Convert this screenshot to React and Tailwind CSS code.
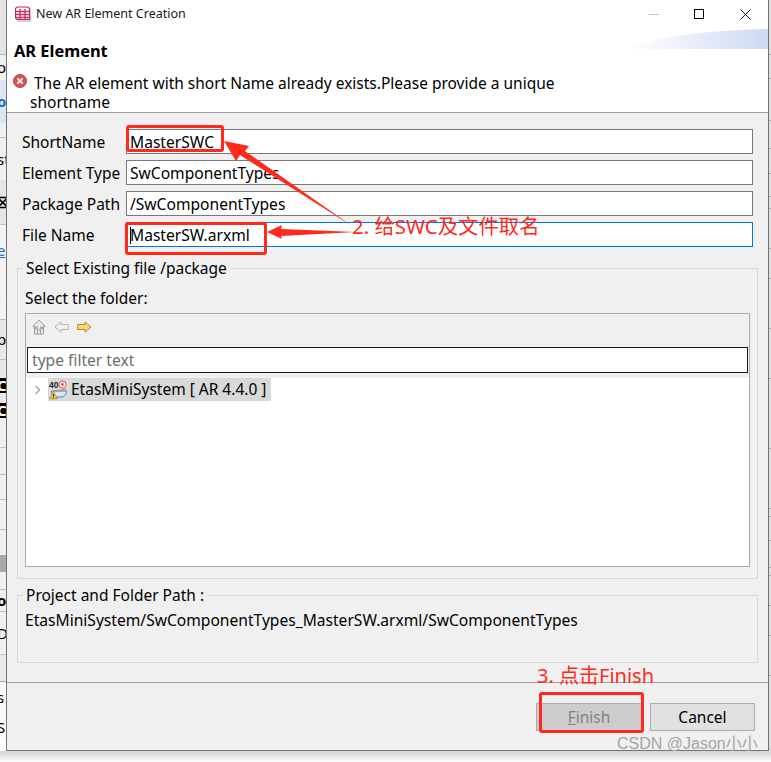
import React from 'react';

const FONT = "font-['Noto_Sans','Noto_Sans_CJK_SC',sans-serif]";

// bits of the window behind the dialog, top to bottom
const leftScraps = [
  { h: 'h-[55px]', cls: 'bg-[#e4e4e4] border-b border-[#b5b5b5]' },
  { h: 'h-[25px]', cls: 'bg-[#f0f0f0]', text: 'oc', tc: 'text-black' },
  { h: 'h-[43px]', cls: 'bg-[#dbe6f1]', text: 'o', tc: 'text-[#1a6fc0] font-bold' },
  { h: 'h-[15px]', cls: 'bg-[#f0f0f0] border-b border-[#bdbdbd]' },
  { h: 'h-[42px]', cls: 'bg-[#f0f0f0]', text: 'st', tc: 'text-black' },
  { h: 'h-[45px]', cls: 'bg-[#e6e6e6] border-b border-[#c4c4c4]', text: '⛝', tc: 'text-black font-bold' },
  { h: 'h-[50px]', cls: 'bg-[#f3f3f3]', text: 'e', tc: 'text-[#1a6fc0] underline' },
  { h: 'h-[45px]', cls: 'bg-[#f3f3f3] border-b border-[#bdbdbd]', text: ':', tc: 'text-black' },
  { h: 'h-[40px]', cls: 'bg-[#e8e8e8] border-b border-[#bdbdbd]', text: 'p', tc: 'text-black' },
  { h: 'h-[18px]', cls: 'bg-[#e8e8e8]' },
  { h: 'h-[15px]', cls: 'bg-black', text: 'C', tc: 'text-white font-bold' },
  { h: 'h-[10px]', cls: 'bg-[#e8e8e8]' },
  { h: 'h-[15px]', cls: 'bg-black', text: 'C', tc: 'text-white font-bold' },
  { h: 'h-[30px]', cls: 'bg-[#f0f0f0] border-b border-[#c4c4c4]' },
  { h: 'h-[27px]', cls: 'bg-[#f0f0f0] border-b border-[#c4c4c4]' },
  { h: 'h-[25px]', cls: 'bg-[#f0f0f0] border-b border-[#c4c4c4]' },
  { h: 'h-[30px]', cls: 'bg-[#f0f0f0] border-b border-[#c4c4c4]' },
  { h: 'h-[25px]', cls: 'bg-[#f0f0f0]' },
  { h: 'h-[17px]', cls: 'bg-[#a9a9a9]' },
  { h: 'h-[18px]', cls: 'bg-[#f0f0f0] border-b border-[#c4c4c4]' },
  { h: 'h-[22px]', cls: 'bg-[#f0f0f0] border-b border-[#c4c4c4]', text: 'o', tc: 'text-black font-bold' },
  { h: 'h-[43px]', cls: 'bg-[#f0f0f0] border-b border-[#c4c4c4]', text: 'D', tc: 'text-black' },
  { h: 'h-[27px]', cls: 'bg-[#e9e9e9] border-b border-[#a8a8a8]' },
  { h: 'h-[30px]', cls: 'bg-[#fafafa]', text: 's', tc: 'text-black' },
  { h: 'h-[30px]', cls: 'bg-[#fafafa]', text: 'S', tc: 'text-black' },
];

const rightLines = [55, 24, 42, 28, 25, 23, 12, 40, 30, 50, 50, 70, 60, 8, 24, 27, 8, 30, 30, 40];

const Field = ({ label, value, active }) => (
  <div className="flex items-center h-[25px]">
    <label className="w-[104px] text-[15.500px] leading-[25px] pt-[1px] text-black">{label}</label>
    <div className={`w-[627px] h-[25px] bg-white border flex items-center pl-[3px] pt-[2px] text-[15.600px] text-black ${active ? 'border-[#0078d7]' : 'border-[#7a7a7a]'}`}>
      {active && <span className="w-px h-[17px] bg-black -mr-px" />}
      {value}
    </div>
  </div>
);

const AppIcon = () => (
  <svg width="16" height="16" viewBox="0 0 16 16" className="shrink-0">
    <rect x="2" y="2" width="14" height="14" fill="#d4d4d4" />
    <path d="M.5 3.500a2.500 2.500 0 0 1 2.500-2.500h9a2.500 2.500 0 0 1 2.500 2.500v10h-11.500a2.500 2.500 0 0 1-2.500-2.500z" fill="#fff" stroke="#c2265f" strokeWidth="1.200" />
    <path d="M1 5.500h13.500M1 8.500h13.500M1 11.500h13.500M5 3v10.500M10 3v10.500" stroke="#c9336b" strokeWidth="1.400" />
  </svg>
);

const ErrorIcon = () => (
  <svg width="14" height="14" viewBox="0 0 15 15" className="shrink-0">
    <circle cx="7.500" cy="7.500" r="7" fill="#d9534f" stroke="#b9403c" />
    <path d="M4.700 4.700l5.600 5.600M10.300 4.700l-5.600 5.600" stroke="#fff" strokeWidth="2" />
  </svg>
);

const HomeIcon = () => (
  <svg width="14" height="16" viewBox="0 0 14 16">
    <path d="M7 1L.8 7.500h1.700V15h9V7.500h1.700z" fill="#e9e9e9" stroke="#9c9c9c" />
    <path d="M5.500 15v-4h3v4M3.500 8h2v2h-2zM8.500 8h2v2h-2z" fill="none" stroke="#9c9c9c" />
  </svg>
);

const ArrowIcon = ({ flip, fill, stroke }) => (
  <svg width="15" height="12" viewBox="0 0 15 12" className={`mt-[2px] ${flip ? '-scale-x-100' : ''}`}>
    <path d="M.7 3.500h7.300V.8L14 6l-6 5.200V8.500H.7z" fill={fill} stroke={stroke} strokeLinejoin="round" />
  </svg>
);

const ProjectIcon = () => (
  <svg width="18" height="20" viewBox="0 0 18 20" className="shrink-0">
    <text x="0" y="7.500" fontSize="8.500" fontWeight="700" fill="#222" fontFamily="Liberation Sans, sans-serif">40</text>
    <circle cx="13.500" cy="4.500" r="3.500" fill="#fff" stroke="#e24a4a" />
    <circle cx="13.500" cy="4.500" r="1.400" fill="#e24a4a" />
    <path d="M2.500 11h15c0 3.500-2.500 6-5.500 6H7c-2.500 0-4.500-2.500-4.500-6z" fill="#dbe8f7" stroke="#3f7fd0" />
    <path d="M4.500 11.500L17 9" stroke="#d88a2e" strokeWidth="1.200" />
    <path d="M4.500 11.500L.5 18.800h8z" fill="#f6c945" stroke="#b58a1a" strokeWidth=".8" />
    <path d="M4.500 14v2.500M4.500 17.200v.8" stroke="#222" />
  </svg>
);

export default function App() {
  return (
    <div className={`relative w-[771px] h-[762px] overflow-hidden bg-white flex flex-col ${FONT}`}>
      <div className="flex h-[751px]">
        {/* window behind */}
        <div className="w-[6px] shrink-0 flex flex-col overflow-hidden">
          {leftScraps.map((row, i) => (
            <div key={i} className={`${row.h} ${row.cls} shrink-0 flex items-center justify-start overflow-hidden text-[15px] leading-none`}>
              {row.text && <span className={`${row.tc} -ml-[3px] whitespace-nowrap`}>{row.text}</span>}
            </div>
          ))}
        </div>

        <div className="w-[763px] shrink-0 flex flex-col bg-[#f0f0f0] border-x border-b border-[#747474]">
          {/* title + banner */}
          <div className="relative h-[113px] shrink-0 bg-white border-b border-[#a0a0a0]">
            <svg width="142" height="22" viewBox="0 0 142 22" className="absolute right-0 top-[28px]">
              <defs>
                <linearGradient id="band" x1="0" x2="1" y1="0" y2="0">
                  <stop offset="0" stopColor="#ffffff" />
                  <stop offset="1" stopColor="#cfdaf3" />
                </linearGradient>
              </defs>
              <path d="M0 21C30 8 90 2 142 1v20z" fill="url(#band)" />
            </svg>
            <div className="flex items-center h-[28px] pl-[8px]">
              <AppIcon />
              <span className="ml-[5px] text-[12.500px] text-[#1a1a1a] whitespace-nowrap">New AR Element Creation</span>
              <div className="ml-auto flex items-center h-full pr-[17px] gap-[35px]">
                <span className="w-[10px] h-px bg-[#c4c4c4]" />
                <span className="w-[10px] h-[10px] border border-black" />
                <svg width="11" height="11" viewBox="0 0 11 11" className="ml-[1px]">
                  <path d="M.5.500l10 10M10.500.500l-10 10" stroke="#111" />
                </svg>
              </div>
            </div>
            <div className="pl-[7px] mt-[12px] text-[16.400px] leading-[22px] font-bold text-black">AR Element</div>
            <div className="pl-[6px] mt-[12px] h-[19px] flex items-start gap-[7px]">
              <ErrorIcon />
              <span className="text-[15.500px] leading-[19px] text-black whitespace-nowrap">The AR element with short Name already exists.Please provide a unique</span>
            </div>
            <div className="pl-[23px] text-[15.500px] leading-[19px] text-black">shortname</div>
          </div>

          {/* form */}
          <div className="pt-[16px] pl-[15px] flex flex-col gap-[6px]">
            <Field label="ShortName" value="MasterSWC" />
            <Field label="Element Type" value="SwComponentTypes" />
            <Field label="Package Path" value="/SwComponentTypes" />
            <Field label="File Name" value="MasterSW.arxml" active />
          </div>

          <fieldset className="mt-[11px] ml-[10px] w-[741px] h-[321px] border border-[#d9d9d9] px-[7px] pt-[10px]">
            <legend className="-ml-[2px] px-[3px] text-[15.500px] leading-[20px] text-black">Select Existing file /package</legend>
            <div className="text-[15.500px] leading-[20px] h-[25px] text-black">Select the folder:</div>
            <div className="w-[725px] h-[254px] border border-[#ababab] bg-white flex flex-col">
              <div className="bg-[#f0f0f0] h-[64px] shrink-0 px-[1px]">
                <div className="flex items-start h-[33px] pt-[5px] pl-[5px] gap-[8px]">
                  <HomeIcon />
                  <ArrowIcon flip fill="#f2f2f2" stroke="#b3b3b3" />
                  <ArrowIcon fill="#f7d774" stroke="#b5892a" />
                </div>
                <div className="h-[26px] border-[1.500px] border-[#1c1c1c] bg-white flex items-center pl-[4px] pt-[2px] text-[15.600px] text-[#6e6e6e]">type filter text</div>
              </div>
              <div className="flex items-center h-[23px] pl-[7px]">
                <svg width="10" height="10" viewBox="0 0 10 10" className="mr-[5px] shrink-0">
                  <path d="M2.500 1l4 4-4 4" fill="none" stroke="#a6a6a6" strokeWidth="1.500" />
                </svg>
                <div className="flex items-center h-[23px] w-[223px] bg-[#d9d9d9] pl-[1px]">
                  <ProjectIcon />
                  <span className="ml-[4px] text-[15.500px] text-black whitespace-nowrap">EtasMiniSystem [ AR 4.4.0 ]</span>
                </div>
              </div>
            </div>
          </fieldset>

          <fieldset className="mt-[6px] ml-[10px] w-[741px] h-[78px] border border-[#d9d9d9] px-[7px]">
            <legend className="-ml-[2px] px-[3px] text-[15.500px] leading-[20px] text-black">Project and Folder Path :</legend>
            <div className="text-[15.600px] leading-[20px] pt-[5px] text-black whitespace-nowrap">EtasMiniSystem/SwComponentTypes_MasterSW.arxml/SwComponentTypes</div>
          </fieldset>

          {/* buttons */}
          <div className="mt-[19px] flex-1 border-t border-[#a0a0a0] flex justify-end items-start pt-[20px] pr-[13px] gap-[8px]">
            <button className="w-[106px] h-[28px] bg-[#cccccc] border border-[#adadad] pt-[1px] text-[15.500px] text-[#838383]"><span className="underline">F</span>inish</button>
            <button className="w-[105px] h-[28px] bg-[#e1e1e1] border border-[#adadad] pt-[1px] text-[15.500px] text-black">Cancel</button>
          </div>
        </div>

        <div className="w-[2px] shrink-0 flex flex-col overflow-hidden bg-[#dcdcdc]">
          {rightLines.map((h, i) => (
            <div key={i} className="border-b border-[#a8a8a8] shrink-0" style={{ height: h }} />
          ))}
        </div>
      </div>

      <div className="flex-1 bg-gradient-to-b from-[#d4d4d4] to-[#fbfbfb]" />

      {/* red annotations drawn on top of the screenshot */}
      <svg width="771" height="762" viewBox="0 0 771 762" className="absolute inset-0 pointer-events-none">
        <path d="M224 141L249 146L245 151L352 226L240 155L236 161z" fill="#ff2a1c" />
        <path d="M267 232L282 225L281 229L356 232L281 236L282 239z" fill="#ff2a1c" />
      </svg>
      <div className="absolute left-[126px] top-[125px] w-[98px] h-[27px] border-[3px] border-[#ff2a1c] rounded-[3px]" />
      <div className="absolute left-[125px] top-[222px] w-[142px] h-[33px] border-[3px] border-[#ff2a1c] rounded-[3px]" />
      <div className="absolute left-[539px] top-[692px] w-[105px] h-[41px] border-[3px] border-[#ff2a1c] rounded-[3px]" />
      <span className="absolute left-[352px] top-[212px] text-[20.400px] leading-[28px] text-[#ff2a1c] whitespace-nowrap">2. 给SWC及文件取名</span>
      <span className="absolute left-[537px] top-[662px] text-[20px] leading-[28px] text-[#ff2a1c] whitespace-nowrap">3. 点击Finish</span>
      <span className="absolute left-[617px] top-[733px] font-['Liberation_Sans','Noto_Sans_CJK_SC',sans-serif] text-[16px] leading-[22px] text-[#a5a5a5] whitespace-nowrap">CSDN @Jason小小</span>
    </div>
  );
}
